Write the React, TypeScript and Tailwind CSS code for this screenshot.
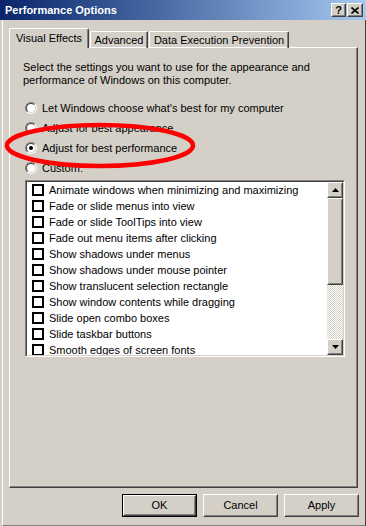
import React from 'react';

type BoxProps = { className?: string; children?: React.ReactNode };

// classic raised 3D edge
const Raised: React.FC<BoxProps> = ({ className = '', children }) => (
    <div className={`border border-t-white border-l-white border-r-[#404040] border-b-[#404040] ${className}`}>
        <div className="w-full h-full border border-t-[#d4d0c8] border-l-[#d4d0c8] border-r-[#808080] border-b-[#808080] flex items-center justify-center bg-[#d4d0c8]">
            {children}
        </div>
    </div>
);

const Radio: React.FC<{ checked?: boolean }> = ({ checked }) => (
    <div className="w-[12px] h-[12px] shrink-0 rounded-full border border-t-[#808080] border-l-[#808080] border-r-white border-b-white">
        <div className="w-full h-full rounded-full border border-t-[#404040] border-l-[#404040] border-r-[#d4d0c8] border-b-[#d4d0c8] bg-white flex items-center justify-center">
            {checked && <div className="w-[4px] h-[4px] rounded-full bg-black" />}
        </div>
    </div>
);

const Arrow: React.FC<{ up?: boolean }> = ({ up }) => (
    <svg width="7" height="4" viewBox="0 0 7 4">
        {up ? <path d="M3.5 0 L7 4 L0 4 Z" fill="#000" /> : <path d="M0 0 L7 0 L3.5 4 Z" fill="#000" />}
    </svg>
);

const options = [
    { label: "Let Windows choose what's best for my computer", checked: false },
    { label: 'Adjust for best appearance', checked: false },
    { label: 'Adjust for best performance', checked: true },
    { label: 'Custom:', checked: false },
];

const effects = [
    'Animate windows when minimizing and maximizing',
    'Fade or slide menus into view',
    'Fade or slide ToolTips into view',
    'Fade out menu items after clicking',
    'Show shadows under menus',
    'Show shadows under mouse pointer',
    'Show translucent selection rectangle',
    'Show window contents while dragging',
    'Slide open combo boxes',
    'Slide taskbar buttons',
    'Smooth edges of screen fonts',
];

export default function App() {
    return (
        <div className="relative w-[366px] h-[526px] bg-[#d4d0c8] flex flex-col font-['Liberation_Sans',Arial,sans-serif] text-[11px] text-black overflow-hidden">
            {/* title bar */}
            <div className="h-[20px] shrink-0 flex items-center bg-gradient-to-r from-[#0a246a] to-[#a6caf0] pl-[5px] pr-[3px]">
                <span className="flex-1 text-white font-bold text-[11px] leading-none">Performance Options</span>
                <div className="flex gap-[1px]">
                    <Raised className="w-[15px] h-[14px]">
                        <span className="font-bold text-[11px] leading-none">?</span>
                    </Raised>
                    <Raised className="w-[16px] h-[14px]">
                        <svg width="8" height="7" viewBox="0 0 8 7">
                            <path d="M0.5 0.5 L7.5 6.5 M7.5 0.5 L0.5 6.5" stroke="#000" strokeWidth="1.6" />
                        </svg>
                    </Raised>
                </div>
            </div>

            <div className="flex-1 flex flex-col ml-[2px] border-l border-white border-r border-r-[#404040] border-b border-b-[#808080] pt-[8px] pl-[6px]">
                {/* tabs */}
                <div className="flex items-end h-[20px] relative z-10 -mb-px">
                    <div className="h-[20px] w-[80px] flex items-center justify-center bg-[#d4d0c8] border-l border-t border-white border-r border-r-[#404040] rounded-t-[2px] shadow-[inset_-1px_0_0_#808080]">
                        Visual Effects
                    </div>
                    <div className="h-[17px] w-[58px] ml-px flex items-center justify-center border-l border-t border-white border-r border-r-[#404040] rounded-t-[2px] shadow-[inset_-1px_0_0_#808080]">
                        Advanced
                    </div>
                    <div className="h-[17px] w-[140px] ml-px flex items-center justify-center border-l border-t border-white border-r border-r-[#404040] rounded-t-[2px] shadow-[inset_-1px_0_0_#808080]">
                        Data Execution Prevention
                    </div>
                </div>

                {/* panel */}
                <div className="w-[349px] h-[441px] border-l border-t border-white border-r border-b border-r-[#404040] border-b-[#404040] shadow-[inset_-1px_-1px_0_#808080] flex flex-col">
                    <p className="mt-[13px] pl-[13px] leading-[13px]">
                        Select the settings you want to use for the appearance and<br />
                        performance of Windows on this computer.
                    </p>
                    <div className="mt-[11px] flex flex-col">
                        {options.map(o => (
                            <div key={o.label} className="h-[20px] flex items-center pl-[15px] gap-[5px]">
                                <Radio checked={o.checked} />
                                <span>{o.label}</span>
                            </div>
                        ))}
                    </div>

                    {/* list box */}
                    <div className="mt-[2px] ml-[15px] w-[320px] h-[177px] border border-t-[#808080] border-l-[#808080] border-r-white border-b-white">
                        <div className="w-full h-full border border-t-[#404040] border-l-[#404040] border-r-[#d4d0c8] border-b-[#d4d0c8] bg-white flex">
                            <div className="flex-1 overflow-hidden">
                                {effects.map(e => (
                                    <div key={e} className="h-[16px] flex items-center pl-[5px] gap-[5px] whitespace-nowrap">
                                        <div className="w-[12px] h-[12px] shrink-0 border-2 border-black bg-white" />
                                        <span>{e}</span>
                                    </div>
                                ))}
                            </div>
                            <div className="w-[16px] shrink-0 flex flex-col">
                                <Raised className="w-[16px] h-[16px] shrink-0"><Arrow up /></Raised>
                                <Raised className="w-[16px] h-[87px] shrink-0" />
                                <div className="flex-1 bg-[repeating-conic-gradient(#ffffff_0%_25%,#d4d0c8_0%_50%)] bg-[length:2px_2px]" />
                                <Raised className="w-[16px] h-[16px] shrink-0"><Arrow /></Raised>
                            </div>
                        </div>
                    </div>
                </div>

                {/* dialog buttons */}
                <div className="mt-[6px] flex justify-end gap-[6px] pr-[6px]">
                    <div className="w-[75px] h-[23px] border border-black">
                        <Raised className="w-full h-full">OK</Raised>
                    </div>
                    <Raised className="w-[75px] h-[23px]">Cancel</Raised>
                    <Raised className="w-[75px] h-[23px]">Apply</Raised>
                </div>
            </div>

            {/* red annotation ellipse */}
            <svg className="absolute left-0 top-0 pointer-events-none" width="366" height="526">
                <ellipse cx="100" cy="145.5" rx="93" ry="20.5" fill="none" stroke="#ff0000" strokeWidth="4.5" />
            </svg>
        </div>
    );
}
